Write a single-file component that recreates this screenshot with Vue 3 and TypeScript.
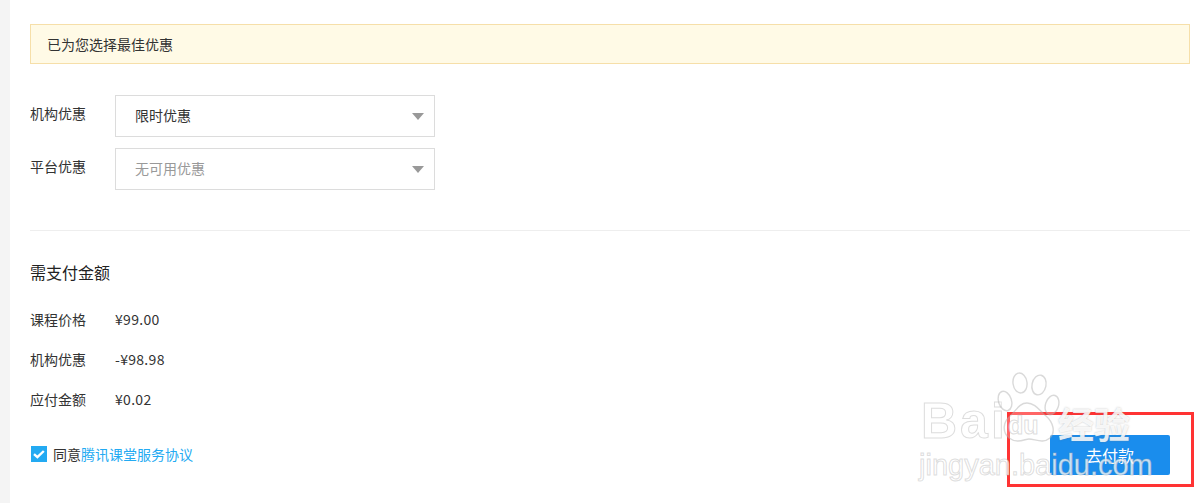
<template>
  <div class="page">
    <main class="panel">
      <div class="notice">已为您选择最佳优惠</div>

      <div class="coupons">
        <div v-for="c in coupons" :key="c.label" class="coupon-row">
          <span class="coupon-label">{{ c.label }}</span>
          <div class="select" :class="{ 'select--empty': c.empty }">
            <span>{{ c.value }}</span>
            <i class="caret"></i>
          </div>
        </div>
      </div>

      <div class="divider"></div>

      <h3 class="title">需支付金额</h3>
      <div v-for="p in prices" :key="p.label" class="price-row">
        <span class="price-label">{{ p.label }}</span>
        <span class="price-value">{{ p.value }}</span>
      </div>

      <div class="footer">
        <label class="agree">
          <svg class="check" width="16" height="16" viewBox="0 0 16 16">
            <rect width="16" height="16" fill="#23aaf2" />
            <path d="M3 8.2 6.4 11.2 12.8 5" fill="none" stroke="#fff" stroke-width="2.4" />
          </svg>
          <span>同意<a class="link">腾讯课堂服务协议</a></span>
        </label>
        <button class="pay">去付款</button>
      </div>
    </main>

    <div class="highlight"></div>

    <div class="watermark">
      <div class="wm-top">
        <span class="wm-bai">Bai</span>
        <div class="wm-paw">
          <svg width="66" height="74" viewBox="0 0 66 74">
            <g fill="rgba(255,255,255,.25)" stroke="rgba(170,170,170,.45)" stroke-width="1.4">
              <ellipse cx="11" cy="29" rx="6.5" ry="10" transform="rotate(-18 11 29)" />
              <ellipse cx="26" cy="11" rx="7" ry="10" transform="rotate(-8 26 11)" />
              <ellipse cx="45" cy="13" rx="7" ry="10" transform="rotate(12 45 13)" />
              <ellipse cx="58" cy="33" rx="6.5" ry="10" transform="rotate(18 58 33)" />
              <path d="M33 31C25 31 22 39 16 44 9 50 8 60 15 66 23 72 31 67 35 67 41 67 49 72 56 66 62 60 59 50 52 44 46 39 41 31 33 31Z" />
            </g>
          </svg>
          <span class="wm-du">du</span>
        </div>
        <span class="wm-cn">经验</span>
      </div>
      <div class="wm-url">jingyan.baidu.com</div>
    </div>
  </div>
</template>

<script setup lang="ts">
const coupons = [
  { label: '机构优惠', value: '限时优惠', empty: false },
  { label: '平台优惠', value: '无可用优惠', empty: true },
];

const prices = [
  { label: '课程价格', value: '¥99.00' },
  { label: '机构优惠', value: '-¥98.98' },
  { label: '应付金额', value: '¥0.02' },
];
</script>

<style>
html,
body {
  margin: 0;
  background: #fff;
}
</style>

<style scoped>
.page {
  position: relative;
  width: 1201px;
  height: 503px;
  overflow: hidden;
  background: #fff;
  border-left: 10px solid #f4f4f4;
  box-sizing: border-box;
  font-family: "Noto Sans CJK SC", "Noto Sans", sans-serif;
  font-size: 14px;
  color: #333;
}

.panel {
  padding: 24px 11px 0 20px;
}

.notice {
  height: 40px;
  box-sizing: border-box;
  padding-left: 16px;
  line-height: 38px;
  background: #fffae6;
  border: 1px solid #f6dfa9;
}

.coupons {
  margin-top: 31px;
  display: flex;
  flex-direction: column;
  gap: 11px;
}

.coupon-row {
  display: flex;
}

.coupon-label {
  width: 85px;
  line-height: 36px;
}

.select {
  width: 320px;
  height: 42px;
  box-sizing: border-box;
  padding: 0 10px 2px 19px;
  display: flex;
  align-items: center;
  justify-content: space-between;
  border: 1px solid #dcdcdc;
}

.select--empty {
  color: #999;
}

.caret {
  width: 0;
  height: 0;
  margin-top: 2px;
  border-left: 6px solid transparent;
  border-right: 6px solid transparent;
  border-top: 7px solid #999;
}

.divider {
  margin-top: 40px;
  height: 1px;
  background: #eee;
}

.title {
  margin: 31px 0 0;
  font-size: 16px;
  line-height: 20px;
  font-weight: 400;
  color: #222;
}

.price-row {
  margin-top: 20px;
  display: flex;
  height: 20px;
  line-height: 20px;
}

.title + .price-row {
  margin-top: 27px;
}

.price-label {
  width: 85px;
}

.price-value {
  letter-spacing: 0.3px;
}

.footer {
  margin-top: 26px;
  padding-right: 20px;
  display: flex;
  justify-content: space-between;
  align-items: center;
}

.agree {
  display: flex;
  align-items: center;
  gap: 6px;
  margin-left: 1px;
  margin-top: -2px;
}

.link {
  color: #23aaf2;
}

.pay {
  width: 120px;
  height: 40px;
  border: 0;
  border-radius: 2px;
  background: #1a8ded;
  color: #fff;
  font: inherit;
  font-size: 16px;
}

.highlight {
  position: absolute;
  left: 997px;
  top: 412px;
  width: 187px;
  height: 75px;
  box-sizing: border-box;
  border: 3px solid #f33;
}

.watermark {
  position: absolute;
  left: 909px;
  top: 372px;
  width: 240px;
  pointer-events: none;
}

.wm-top {
  display: flex;
  align-items: flex-end;
  height: 74px;
}

.wm-bai,
.wm-du,
.wm-url {
  color: rgba(255, 255, 255, 0.75);
  -webkit-text-stroke: 1px rgba(170, 170, 170, 0.4);
  font-family: "Liberation Sans", sans-serif;
}

.wm-bai {
  width: 81px;
  margin-left: 2px;
  font-size: 50px;
  font-weight: 700;
  line-height: 50px;
  letter-spacing: 3px;
}

.wm-paw {
  position: relative;
  width: 66px;
  height: 74px;
  margin-left: -8px;
}

.wm-du {
  position: absolute;
  left: 14px;
  top: 40px;
  font-size: 25px;
  font-weight: 700;
  line-height: 26px;
}

.wm-cn {
  margin-left: -2px;
  font-size: 36px;
  font-weight: 700;
  line-height: 46px;
  color: rgba(255, 255, 255, 0.85);
  text-shadow: 0 0 2px rgba(120, 120, 120, 0.45);
}

.wm-url {
  margin-top: 3px;
  font-size: 29px;
  line-height: 32px;
  white-space: nowrap;
}
</style>
